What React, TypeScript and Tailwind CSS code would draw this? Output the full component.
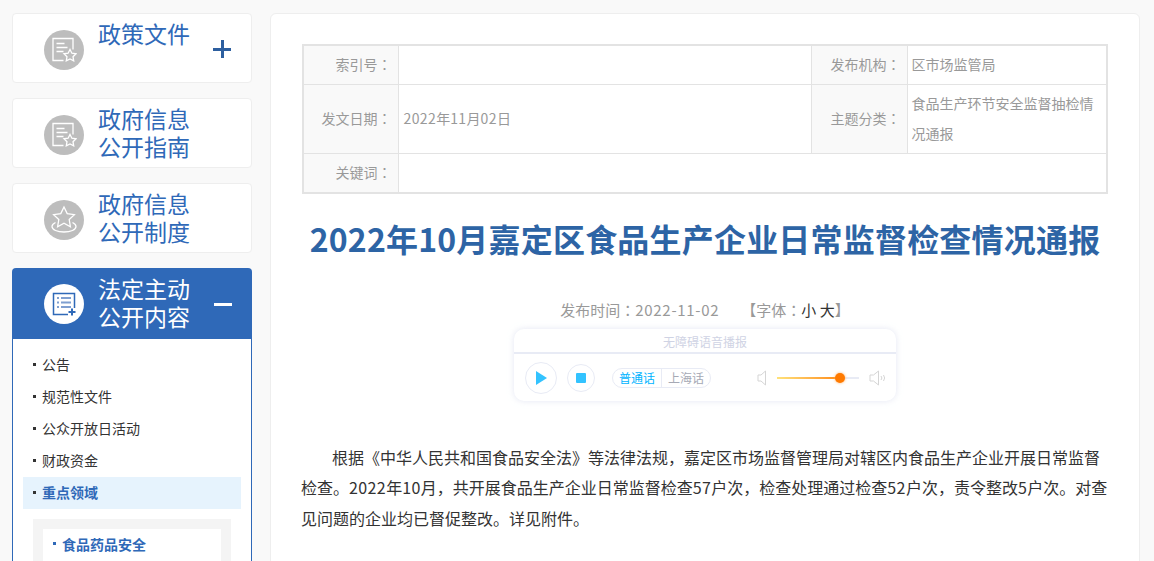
import React from 'react';

const DocStarIcon = () => (
  <svg width="26" height="26" viewBox="0 0 26 26" fill="none" stroke="#fff" strokeWidth="1.3">
    <path d="M12.500 23.500H2v-22h20v11" />
    <path d="M5.500 6.500h8M5.500 10.500h11M5.500 14.500h7" />
    <path d="M19 12.500l1.900 3.700 4.100.6-3 2.900.7 4.100-3.700-1.900-3.700 1.900.7-4.100-3-2.900 4.100-.6z" />
  </svg>
);

const StarRingIcon = () => (
  <svg width="26" height="30" viewBox="0 0 26 30" fill="none" stroke="#fff" strokeWidth="1.3">
    <path d="M13 2l3.2 6.6 7.2 1-5.2 5 1.2 7.1-6.4-3.400-6.400 3.400 1.200-7.100-5.200-5 7.200-1z" />
    <path d="M4.500 17.500C2.300 18.600 1 20 1 21.500 1 24.800 6.400 27 13 27s12-2.200 12-5.500c0-1.500-1.300-2.900-3.500-4" />
  </svg>
);

const ListPlusIcon = () => (
  <svg width="24" height="24" viewBox="0 0 24 24" fill="none" stroke="#2f69b8" strokeWidth="1.500">
    <path d="M16 22.500H1.500v-21h21v14.500" />
    <path d="M5 6h2M9 6h10M5 10.500h2M9 10.500h10M5 15h2M9 15h10" strokeWidth="2" stroke="#7f9fd0" />
    <path d="M20 16.500v7M16.500 20h7" strokeWidth="2" />
  </svg>
);

// centred full-width colon, as the TC face draws it
const Colon = () => <span className="font-['Noto_Sans_CJK_TC']">：</span>;

const NavCard = ({ lines, icon, sign }: { lines: string[]; icon: React.ReactNode; sign?: string }) => (
  <div className="h-[70px] shrink-0 flex bg-white border border-[#eeeeee] rounded-sm">
    <div className="w-10 h-10 ml-[31px] mt-4 rounded-full bg-[#bdbdbd] flex items-center justify-center shrink-0">{icon}</div>
    <div className="ml-[14px] pt-[5px] w-[100px] text-[23px] leading-[28px] text-[#2f69b8]">
      {lines.map((l) => <div key={l}>{l}</div>)}
    </div>
    {sign === 'plus' && (
      <div className="ml-[15px] mt-[26px] w-[18px] h-[18px] relative">
        <div className="absolute left-0 right-0 top-[8px] h-[2.500px] bg-[#2d5f9f]" />
        <div className="absolute top-0 bottom-0 left-[8px] w-[2.500px] bg-[#2d5f9f]" />
      </div>
    )}
  </div>
);

const SideItem = ({ text, active }: { text: string; active?: boolean }) => (
  <div className={`h-8 pb-[2px] flex items-center pl-[10px] text-[14px] ${active ? 'bg-[#e6f3fd] text-[#2f69b8] font-bold' : 'text-[#333333]'}`}>
    <span className="w-[3px] h-[3px] mr-[6px] bg-[#333333]" />
    {text}
  </div>
);

const InfoTable = () => (
  <table className="w-[806px] border-collapse border-2 border-[#e3e3e3] text-[14px] text-[#999999] table-fixed">
    <colgroup>
      <col className="w-[95px]" />
      <col className="w-[413px]" />
      <col className="w-[96px]" />
      <col className="w-[200px]" />
    </colgroup>
    <tbody>
      <tr className="h-[39px]">
        <td className="border border-[#e3e3e3] bg-[#f9f9f9] text-right pr-[6px]">索引号<Colon /></td>
        <td className="border border-[#e3e3e3] px-[5px]"></td>
        <td className="border border-[#e3e3e3] bg-[#f9f9f9] text-right pr-[6px]">发布机构<Colon /></td>
        <td className="border border-[#e3e3e3] px-[4px]">区市场监管局</td>
      </tr>
      <tr className="h-[69px]">
        <td className="border border-[#e3e3e3] bg-[#f9f9f9] text-right pr-[6px]">发文日期<Colon /></td>
        <td className="border border-[#e3e3e3] px-[5px]"><span className="tracking-[0.4px]">2022</span>年<span className="tracking-[0.4px]">11</span>月<span className="tracking-[0.4px]">02</span>日</td>
        <td className="border border-[#e3e3e3] bg-[#f9f9f9] text-right pr-[6px]">主题分类<Colon /></td>
        <td className="border border-[#e3e3e3] px-[4px] pb-[2px] leading-[30px]">食品生产环节安全监督抽检情况通报</td>
      </tr>
      <tr className="h-[40px]">
        <td className="border border-[#e3e3e3] bg-[#f9f9f9] text-right pr-[6px]">关键词<Colon /></td>
        <td className="border border-[#e3e3e3] px-[5px]" colSpan={3}></td>
      </tr>
    </tbody>
  </table>
);

const Player = () => (
  <div className="w-[382px] h-[72px] mx-auto rounded-[10px] bg-white shadow-[0_0_6px_rgba(210,215,235,0.6)]">
    <div className="h-[25px] border-b-2 border-[#e8ebf5] text-center text-[12px] leading-[26px] text-[#cfd3e4]">无障碍语音播报</div>
    <div className="h-[47px] flex items-center pl-[11px]">
      <div className="w-8 h-8 rounded-full border border-[#e8ebf5] flex items-center justify-center">
        <svg width="11" height="14" viewBox="0 0 11 14"><path d="M0 0l11 7-11 7z" fill="#33c3ff" /></svg>
      </div>
      <div className="w-7 h-7 ml-[10px] rounded-full border border-[#e8ebf5] flex items-center justify-center">
        <div className="w-[10px] h-[10px] rounded-[1px] bg-[#33c3ff]" />
      </div>
      <div className="ml-[17px] w-[99px] h-5 flex rounded-full border border-[#e8ebf5] text-[12px] leading-[18px]">
        <span className="w-[49px] text-center text-[#00b4ff] border-r border-[#e8ebf5]">普通话</span>
        <span className="flex-1 text-center text-[#a6a9b5]">上海话</span>
      </div>
      <svg className="ml-[46px]" width="10" height="16" viewBox="0 0 10 16" fill="none" stroke="#d5d5d5" strokeWidth="1"><path d="M8.500 1v14L4 11H1V5h3z" /></svg>
      <div className="ml-[10px] w-[82px] h-0.5 relative bg-[#e8ebf5]">
        <div className="absolute left-0 top-0 h-0.5 w-[63px] bg-gradient-to-r from-[#ffe27a] to-[#ff8a00]" />
        <div className="absolute left-[58px] -top-[4px] w-[10px] h-[10px] rounded-full bg-[#ff7a00] shadow-[0_0_3px_#ffb066]" />
      </div>
      <svg className="ml-[10px]" width="16" height="16" viewBox="0 0 16 16" fill="none" stroke="#d5d5d5" strokeWidth="1"><path d="M9.500 1v14L4.500 11H1V5h3.500z" /><path d="M12 6a3 3 0 0 1 0 4M14.500 5a5 5 0 0 1 0 6" /></svg>
    </div>
  </div>
);

export default function App() {
  return (
    <div className="h-[561px] overflow-hidden bg-[#f9f9f9] flex pl-3 pt-[13px] font-['Noto_Sans_CJK_SC','Noto_Sans',sans-serif]">
      <aside className="w-[240px] shrink-0 flex flex-col gap-[15px]">
        <NavCard lines={['政策文件']} icon={<DocStarIcon />} sign="plus" />
        <NavCard lines={['政府信息', '公开指南']} icon={<DocStarIcon />} />
        <NavCard lines={['政府信息', '公开制度']} icon={<StarRingIcon />} />
        <div className="shrink-0">
          <div className="h-[71px] flex bg-[#2f69b8] rounded-t-sm">
            <div className="w-10 h-10 ml-[32px] mt-4 rounded-full bg-white flex items-center justify-center shrink-0"><ListPlusIcon /></div>
            <div className="ml-[14px] pt-[6px] w-[100px] text-[23px] leading-[28px] text-white">
              <div>法定主动</div>
              <div>公开内容</div>
            </div>
            <div className="ml-[16px] mt-[35px] w-[18px] h-[2.500px] bg-white" />
          </div>
          <div className="border-x border-[#2f69b8] bg-white px-[10px] pt-[10px] h-[300px]">
            <SideItem text="公告" />
            <SideItem text="规范性文件" />
            <SideItem text="公众开放日活动" />
            <SideItem text="财政资金" />
            <SideItem text="重点领域" active />
            <div className="mt-[10px] mx-[10px] p-[10px] bg-[#f4f4f4] h-[200px]">
              <div className="bg-white h-full pl-[10px] pt-[3px] text-[14px] leading-6 font-bold text-[#2f69b8] flex">
                <span className="w-[3px] h-[3px] mt-[10px] mr-[6px] bg-[#2f69b8]" />
                食品药品安全
              </div>
            </div>
          </div>
        </div>
      </aside>

      <main className="ml-[18px] w-[870px] h-[700px] shrink-0 bg-white border border-[#eeeeee] rounded-md pl-[31px] pt-[30px]">
        <InfoTable />
        <h1 className="w-[806px] mt-[19px] text-center text-[32px] leading-[50px] font-bold text-[#2d64a5] tracking-[0.2px] whitespace-nowrap">2022年10月嘉定区食品生产企业日常监督检查情况通报</h1>
        <div className="w-[806px] mt-[35px] text-center text-[15px] leading-6 text-[#999999]">
          发布时间<Colon /><span className="tracking-[0.7px]">2022-11-02</span><span className="ml-[22px]">【字体<Colon /><span className="text-[#333333]">小 大</span>】</span>
        </div>
        <div className="w-[806px] mt-[7px]"><Player /></div>
        <p className="-ml-px mt-[41px] text-[16px] leading-[30.400px] text-[#333333] indent-[31px] whitespace-nowrap">
          根据《中华人民共和国食品安全法》等法律法规，嘉定区市场监督管理局对辖区内食品生产企业开展日常监督<br />
          检查。<span className="tracking-[0.4px]">2022</span>年<span className="tracking-[0.4px]">10</span>月，共开展食品生产企业日常监督检查<span className="tracking-[0.4px]">57</span>户次，检查处理通过检查<span className="tracking-[0.4px]">52</span>户次，责令整改<span className="tracking-[0.4px]">5</span>户次。对查<br />
          见问题的企业均已督促整改。详见附件。
        </p>
      </main>
    </div>
  );
}
